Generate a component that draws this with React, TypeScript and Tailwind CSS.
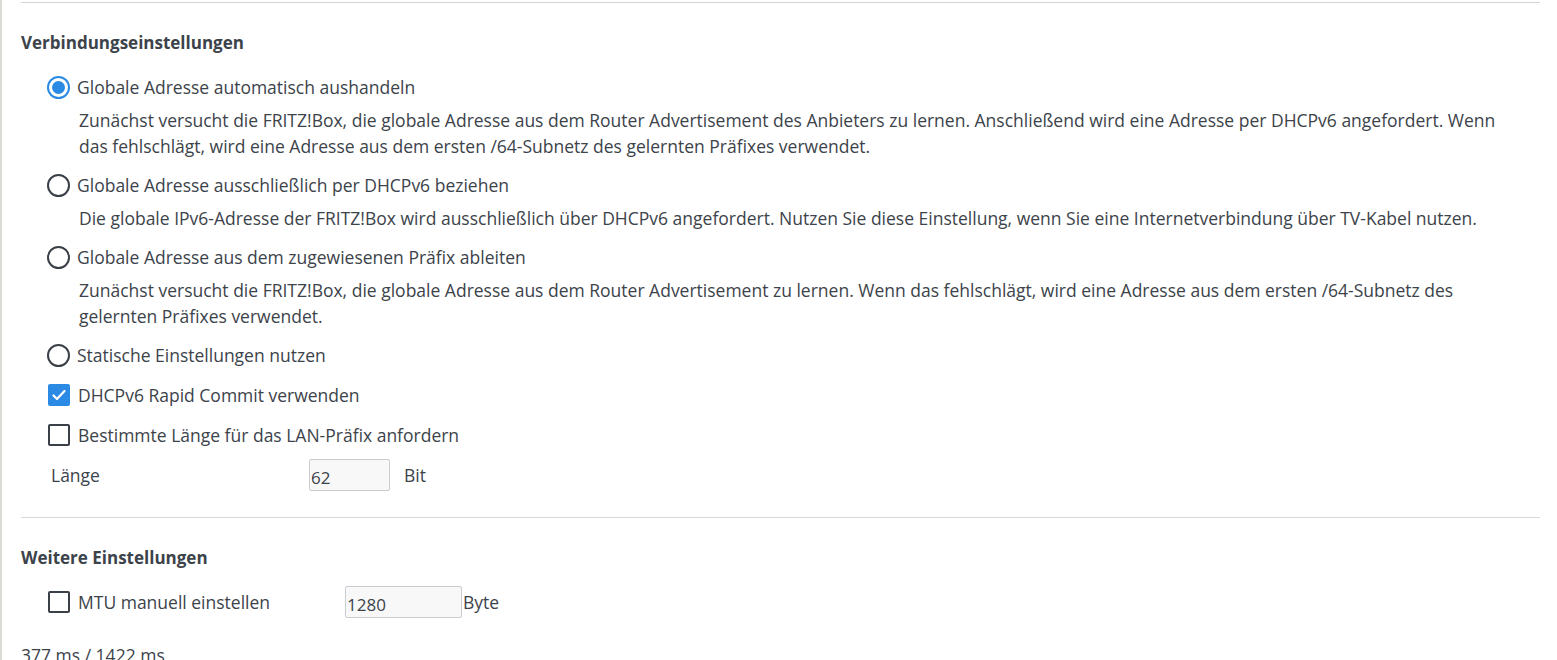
import React from "react";

function Radio({ checked }: { checked?: boolean }) {
  return (
    <span
      className={`flex h-[23px] w-[23px] shrink-0 items-center justify-center rounded-full border-2 ${
        checked ? "border-[#2a8ae4]" : "border-[#3a4047]"
      }`}
    >
      {checked && <span className="h-[13px] w-[13px] rounded-full bg-[#2a8ae4]" />}
    </span>
  );
}

function Checkbox({ checked }: { checked?: boolean }) {
  if (checked) {
    return (
      <span className="flex h-[22px] w-[22px] shrink-0 items-center justify-center rounded-[2px] bg-[#2a8ae4]">
        <svg width="16" height="16" viewBox="0 0 16 16" fill="none">
          <path d="M2.5 8.5l3.5 3.5 7.5-8" stroke="white" strokeWidth="2.2" strokeLinecap="round" strokeLinejoin="round" />
        </svg>
      </span>
    );
  }
  return <span className="h-[22px] w-[22px] shrink-0 rounded-[2px] border-2 border-[#3a4047]" />;
}

function Option({ checked, label, desc }: { checked?: boolean; label: string; desc?: string }) {
  return (
    <div className="mb-[6px]">
      <label className="flex h-10 items-center gap-[7px] pl-[26px]">
        <Radio checked={checked} />
        <span>{label}</span>
      </label>
      {desc && <p className="pl-[58px] pr-[30px] leading-[26px]">{desc}</p>}
    </div>
  );
}

function CheckRow({ checked, label }: { checked?: boolean; label: string }) {
  return (
    <label className="flex h-10 items-center gap-[8px] pl-[27px]">
      <Checkbox checked={checked} />
      <span>{label}</span>
    </label>
  );
}

export default function App() {
  return (
    <div
      className="min-h-screen overflow-hidden border-l-[2px] border-[#dcdad4] bg-white text-[17.5px] text-[#3c434a]"
      style={{ fontFamily: "'Open Sans', 'Noto Sans', sans-serif" }}
    >
      <div className="ml-[19px] mr-[17px] mt-[2px] border-t border-[#d4d4d4]" />
      <div className="px-[19px]">
        <h2 className="mt-[28px] mb-[12px] text-[17px] font-bold leading-[24px]">Verbindungseinstellungen</h2>

        <Option
          checked
          label="Globale Adresse automatisch aushandeln"
          desc="Zunächst versucht die FRITZ!Box, die globale Adresse aus dem Router Advertisement des Anbieters zu lernen. Anschließend wird eine Adresse per DHCPv6 angefordert. Wenn das fehlschlägt, wird eine Adresse aus dem ersten /64-Subnetz des gelernten Präfixes verwendet."
        />
        <Option
          label="Globale Adresse ausschließlich per DHCPv6 beziehen"
          desc="Die globale IPv6-Adresse der FRITZ!Box wird ausschließlich über DHCPv6 angefordert. Nutzen Sie diese Einstellung, wenn Sie eine Internetverbindung über TV-Kabel nutzen."
        />
        <Option
          label="Globale Adresse aus dem zugewiesenen Präfix ableiten"
          desc="Zunächst versucht die FRITZ!Box, die globale Adresse aus dem Router Advertisement zu lernen. Wenn das fehlschlägt, wird eine Adresse aus dem ersten /64-Subnetz des gelernten Präfixes verwendet."
        />
        <label className="flex h-10 items-center gap-[7px] pl-[26px]">
          <Radio />
          <span>Statische Einstellungen nutzen</span>
        </label>
        <CheckRow checked label="DHCPv6 Rapid Commit verwenden" />
        <CheckRow label="Bestimmte Länge für das LAN-Präfix anfordern" />

        <div className="flex h-10 items-center pl-[30px]">
          <span className="w-[258px]">Länge</span>
          <input
            readOnly
            value="62"
            className="h-[32px] w-[81px] rounded-[2px] border border-[#c9cdd1] bg-[#f8f8f8] px-[1px] pt-[4px] text-[17px] text-[#3c434a] outline-none"
          />
          <span className="ml-[14px]">Bit</span>
        </div>
      </div>

      <div className="ml-[19px] mr-[17px] mt-[22px] border-t border-[#d9d9d9]" />

      <div className="px-[19px]">
        <h2 className="mt-[28px] mb-[12px] text-[17px] font-bold leading-[24px]">Weitere Einstellungen</h2>
        <div className="flex h-10 items-center pl-[27px]">
          <Checkbox />
          <span className="w-[275px] pl-[8px]">MTU manuell einstellen</span>
          <input
            readOnly
            value="1280"
            className="h-[32px] w-[117px] rounded-[2px] border border-[#c9cdd1] bg-[#f8f8f8] px-[1px] pt-[4px] text-[17px] text-[#3c434a] outline-none"
          />
          <span className="ml-[1px]">Byte</span>
        </div>
        <p className="mt-[23px] leading-[20px]">377 ms / 1422 ms</p>
      </div>
    </div>
  );
}
